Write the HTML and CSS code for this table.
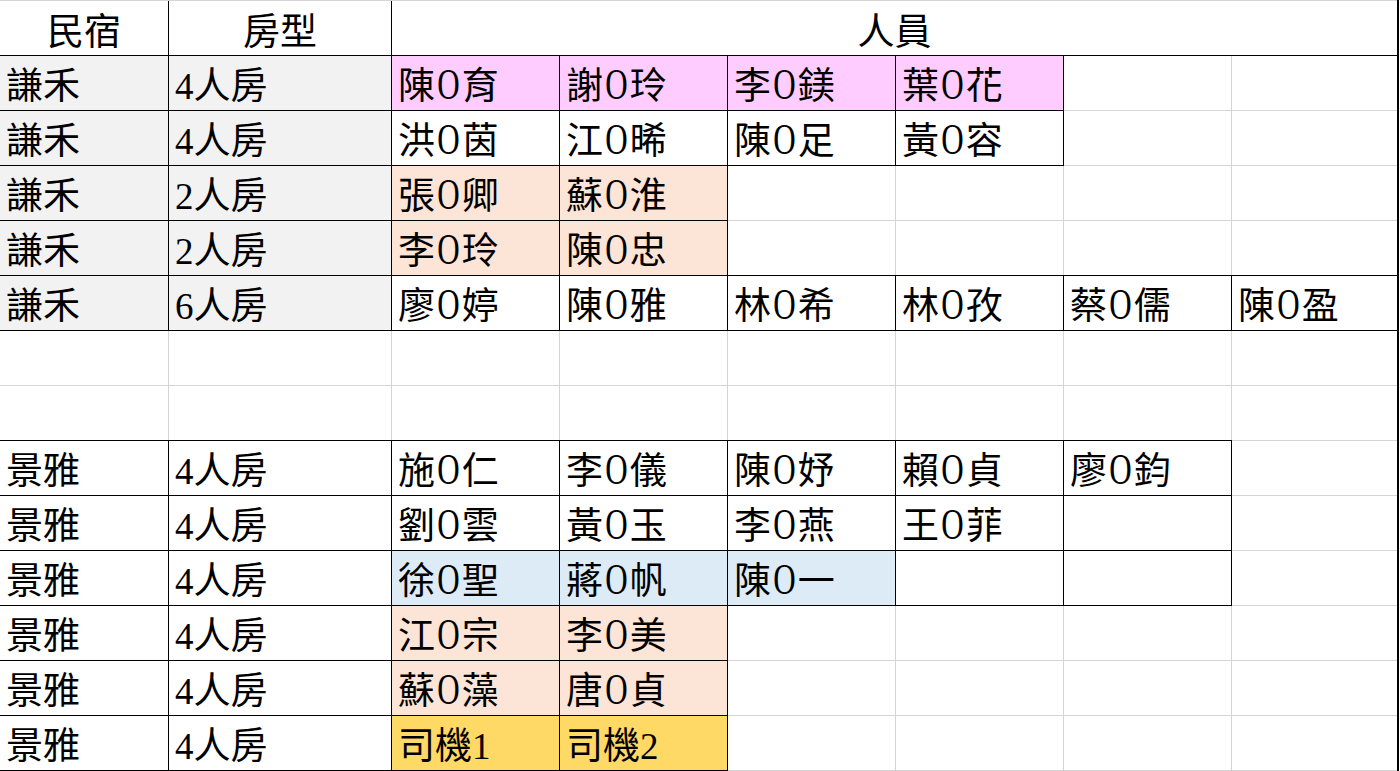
FILE: index.html
```html
<!DOCTYPE html>
<html lang="zh-Hant">
  <head>
    <meta charset="UTF-8" />
    <meta name="viewport" content="width=device-width, initial-scale=1.0" />
    <title>民宿房型</title>
    <link rel="stylesheet" href="styles.css">
  </head>
  <body>
    <div class="sheet">
      <!-- header -->
      <div class="cell hd center">民宿</div>
      <div class="cell hd center">房型</div>
      <div class="cell hd center span6">人員</div>

      <div class="cell ln gray">謙禾</div>
      <div class="cell ln gray">4人房</div>
      <div class="cell ln pink">陳<span class="o">O</span>育</div>
      <div class="cell ln pink">謝<span class="o">O</span>玲</div>
      <div class="cell ln pink">李<span class="o">O</span>鎂</div>
      <div class="cell ln pink">葉<span class="o">O</span>花</div>
      <div class="cell"></div>
      <div class="cell"></div>

      <div class="cell ln gray">謙禾</div>
      <div class="cell ln gray">4人房</div>
      <div class="cell ln">洪<span class="o">O</span>茵</div>
      <div class="cell ln">江<span class="o">O</span>晞</div>
      <div class="cell ln">陳<span class="o">O</span>足</div>
      <div class="cell ln">黃<span class="o">O</span>容</div>
      <div class="cell"></div>
      <div class="cell"></div>

      <div class="cell ln gray">謙禾</div>
      <div class="cell ln gray">2人房</div>
      <div class="cell ln peach">張<span class="o">O</span>卿</div>
      <div class="cell ln peach">蘇<span class="o">O</span>淮</div>
      <div class="cell"></div>
      <div class="cell"></div>
      <div class="cell"></div>
      <div class="cell"></div>

      <div class="cell ln gray">謙禾</div>
      <div class="cell ln gray">2人房</div>
      <div class="cell ln peach">李<span class="o">O</span>玲</div>
      <div class="cell ln peach">陳<span class="o">O</span>忠</div>
      <div class="cell"></div>
      <div class="cell"></div>
      <div class="cell"></div>
      <div class="cell"></div>

      <div class="cell ln gray">謙禾</div>
      <div class="cell ln gray">6人房</div>
      <div class="cell ln">廖<span class="o">O</span>婷</div>
      <div class="cell ln">陳<span class="o">O</span>雅</div>
      <div class="cell ln">林<span class="o">O</span>希</div>
      <div class="cell ln">林<span class="o">O</span>孜</div>
      <div class="cell ln">蔡<span class="o">O</span>儒</div>
      <div class="cell ln">陳<span class="o">O</span>盈</div>

      <div class="cell"></div>
      <div class="cell"></div>
      <div class="cell"></div>
      <div class="cell"></div>
      <div class="cell"></div>
      <div class="cell"></div>
      <div class="cell"></div>
      <div class="cell"></div>

      <div class="cell"></div>
      <div class="cell"></div>
      <div class="cell"></div>
      <div class="cell"></div>
      <div class="cell"></div>
      <div class="cell"></div>
      <div class="cell"></div>
      <div class="cell"></div>

      <div class="cell ln">景雅</div>
      <div class="cell ln">4人房</div>
      <div class="cell ln">施<span class="o">O</span>仁</div>
      <div class="cell ln">李<span class="o">O</span>儀</div>
      <div class="cell ln">陳<span class="o">O</span>妤</div>
      <div class="cell ln">賴<span class="o">O</span>貞</div>
      <div class="cell ln">廖<span class="o">O</span>鈞</div>
      <div class="cell"></div>

      <div class="cell ln">景雅</div>
      <div class="cell ln">4人房</div>
      <div class="cell ln">劉<span class="o">O</span>雲</div>
      <div class="cell ln">黃<span class="o">O</span>玉</div>
      <div class="cell ln">李<span class="o">O</span>燕</div>
      <div class="cell ln">王<span class="o">O</span>菲</div>
      <div class="cell ln"></div>
      <div class="cell"></div>

      <div class="cell ln">景雅</div>
      <div class="cell ln">4人房</div>
      <div class="cell ln blue">徐<span class="o">O</span>聖</div>
      <div class="cell ln blue">蔣<span class="o">O</span>帆</div>
      <div class="cell ln blue">陳<span class="o">O</span>一</div>
      <div class="cell ln"></div>
      <div class="cell ln"></div>
      <div class="cell"></div>

      <div class="cell ln">景雅</div>
      <div class="cell ln">4人房</div>
      <div class="cell ln peach">江<span class="o">O</span>宗</div>
      <div class="cell ln peach">李<span class="o">O</span>美</div>
      <div class="cell"></div>
      <div class="cell"></div>
      <div class="cell"></div>
      <div class="cell"></div>

      <div class="cell ln">景雅</div>
      <div class="cell ln">4人房</div>
      <div class="cell ln peach">蘇<span class="o">O</span>藻</div>
      <div class="cell ln peach">唐<span class="o">O</span>貞</div>
      <div class="cell"></div>
      <div class="cell"></div>
      <div class="cell"></div>
      <div class="cell"></div>

      <div class="cell ln">景雅</div>
      <div class="cell ln">4人房</div>
      <div class="cell ln gold">司機1</div>
      <div class="cell ln gold">司機2</div>
      <div class="cell"></div>
      <div class="cell"></div>
      <div class="cell"></div>
      <div class="cell"></div>
    </div>
  </body>
</html>
```

FILE: styles.css
```css
* {
  box-sizing: border-box;
  margin: 0;
  padding: 0;
}

body {
  background: white;
  font-family: "Liberation Serif", "Noto Sans CJK TC", serif;
  color: #000;
}

.sheet {
  display: grid;
  grid-template-columns: 168px 222px 167px 167px 167px 167px 167px 165px;
  grid-auto-rows: 54px;
  gap: 1px;
  width: fit-content;
  padding: 1px 0;
  background: #d4d4d4;
  border-right: 2px solid #000;
}

.cell {
  background: white;
  font-size: 37px;
  line-height: 40px;
  padding: 0 0 3px 6px;
  display: flex;
  align-items: flex-end;
  white-space: nowrap;
}

.cell.center {
  justify-content: center;
  padding-left: 0;
  padding-bottom: 2px;
}

.span6 {
  grid-column: span 6;
}

/* the masked letter is tall and narrow in the sheet font */
.o {
  display: inline-block;
  transform: scale(0.84, 1.22);
  transform-origin: 50% 80%;
}

/* black cell border, drawn over the grey gridlines */
.ln {
  box-shadow: 0 0 0 1px #000;
}

/* header row keeps the grey top line */
.hd {
  box-shadow: -1px 0 0 #000, 1px 0 0 #000, 0 1px 0 #000, -1px 1px 0 #000,
    1px 1px 0 #000;
}

.gray {
  background: #f2f2f2;
}

.pink {
  background: #ffccff;
}

.peach {
  background: #fce4d6;
}

.blue {
  background: #ddebf7;
}

.gold {
  background: #ffd966;
}
```
